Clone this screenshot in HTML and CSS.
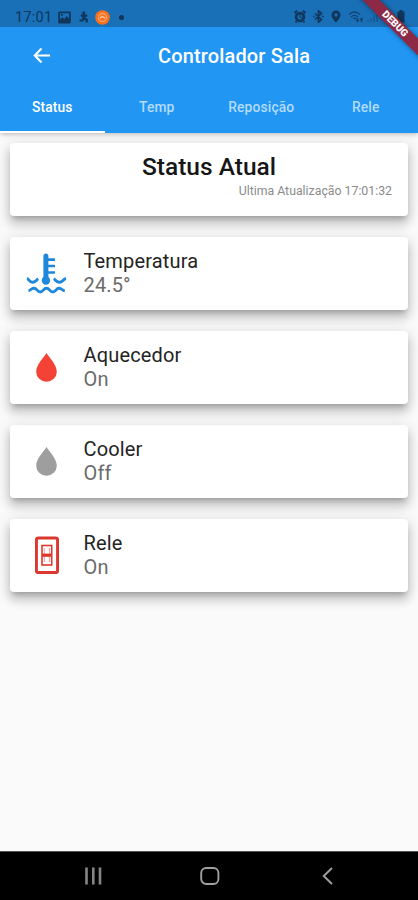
FILE: index.html
```html
<!DOCTYPE html>
<html lang="pt-BR">
<head>
<meta charset="utf-8">
<meta name="viewport" content="width=device-width, initial-scale=1">
<title>Controlador Sala</title>
<link rel="stylesheet" href="styles.css">
</head>
<body>
<div class="phone">
  <header class="header">
    <div class="statusbar">
      <div class="status-left">
        <span class="clock">17:01</span>
        <svg class="s-image" width="13" height="13" viewBox="0 0 13 13"><path fill="currentColor" fill-rule="evenodd" d="M1.500 .5h10a1.300 1.300 0 0 1 1.300 1.300v9.400a1.300 1.300 0 0 1-1.300 1.300h-10A1.300 1.300 0 0 1 .2 11.200V1.800A1.300 1.300 0 0 1 1.500 .5zM1.900 2.200v6.300l2.400-2.300 2 1.700 2.400-2.900 2.400 2.500V2.200zM3 3h1.800v1.800H3z"/></svg>
        <svg class="s-run" width="12" height="14" viewBox="0 0 12 14"><circle cx="5.700" cy="2.800" r="1.600" fill="currentColor"/><path fill="none" stroke="currentColor" stroke-width="2.200" d="M5.700 3.500v5l3 1v3M3 5l3 2 3-2M5.500 8 4.500 10.500H1.500"/></svg>
        <svg class="s-badge" width="15" height="15" viewBox="0 0 15 15"><circle cx="7.500" cy="7.500" r="7.300" fill="#f9701c"/><circle cx="7.500" cy="7.500" r="4" fill="none" stroke="#f4a26b" stroke-width="1.300"/><path d="m5 8 2.300-1.500L10 8" fill="none" stroke="#f9cfae" stroke-width="1.400"/></svg>
        <span class="dot"></span>
      </div>
      <div class="status-right">
        <svg width="12" height="13" viewBox="0 0 12 13"><path d="M.5 3 3.200.8M11.500 3 8.800.8M2.500 11.500l-1 1M9.500 11.500l1 1" stroke="currentColor" stroke-width="2"/><circle cx="6" cy="7" r="3.900" fill="none" stroke="currentColor" stroke-width="2.700"/><path d="M6 4.500V7l2 1" fill="none" stroke="currentColor" stroke-width="1.200"/></svg>
        <svg width="11" height="13" viewBox="0 0 11 13"><path d="m2 3.500 6.500 6-3 2.800V.8l3 2.700-6.500 6M.3 6.500h1.500M9 6.500h1.700" fill="none" stroke="currentColor" stroke-width="1.600"/></svg>
        <svg width="10" height="13" viewBox="0 0 10 13"><path fill="currentColor" fill-rule="evenodd" d="M5 .5a4.500 4.500 0 0 0-4.500 4.500C.5 8.300 5 12.500 5 12.500S9.500 8.300 9.500 5A4.500 4.500 0 0 0 5 .5zM5 3.300a1.700 1.700 0 1 1 0 3.400 1.700 1.700 0 0 1 0-3.400z"/></svg>
        <svg class="wifi" width="16" height="13" viewBox="0 0 16 13"><path d="M1 4.500q5.500-5 11 0M3 7q3.500-3.300 7 0M5.200 9q1.500-1.500 3 0M9.500 8v3.500M8.200 10l1.300 1.500 1.300-1.500M13.500 12V8.500M12.200 9.800l1.300-1.500 1.300 1.500" fill="none" stroke="currentColor" stroke-width="1.300"/></svg>
        <svg class="signal" width="11" height="13" viewBox="0 0 11 13"><path d="M1 12v-2M4 12V8M7 12V5M10 12V1" stroke="currentColor" stroke-width="1.500"/></svg>
        <svg class="battery" width="8" height="13" viewBox="0 0 8 13"><path fill="currentColor" d="M2.500 0h3v1.500h2v11h-7v-11h2z"/></svg>
      </div>
    </div>
    <div class="toolbar">
      <svg class="back" width="18" height="18" viewBox="0 0 18 18"><path d="M17 8.500H2M8.500 1.500 1.800 8.500l6.700 7" fill="none" stroke="#fff" stroke-width="2.100"/></svg>
      <h1>Controlador Sala</h1>
    </div>
    <nav class="tabs">
      <a class="tab active"><span>Status</span></a>
      <a class="tab"><span>Temp</span></a>
      <a class="tab"><span>Reposição</span></a>
      <a class="tab"><span>Rele</span></a>
    </nav>
    <div class="ribbon">DEBUG</div>
  </header>
  <main class="content">
    <section class="card summary">
      <h2>Status Atual</h2>
      <p>Ultima Atualização 17:01:32</p>
    </section>
    <section class="card">
      <div class="icon"><svg class="thermo" width="42" height="42" viewBox="0 0 42 42" fill="none" stroke="#1e88dc"><path d="M19.900 3v25" stroke-width="5" stroke-linecap="round"/><circle cx="19.900" cy="27.500" r="4.200" fill="#1e88dc" stroke="none"/><path d="M22 6.600h7M22 13h7M22 19.500h7" stroke-width="2.700"/><path d="M1 25.500c2 .5 2.300 3.800 5.500 3.800s3.600-2.500 5.800-3.500M27.700 25.800c2.200 1 2.600 3.500 5.800 3.500s3.500-3.300 6.500-3.800" stroke-width="2.900"/><path d="M2.500 37.800C5 37.500 5 35.200 8 35.200s3.200 3.800 6.200 3.800 3.200-3.800 6.300-3.800 3.200 3.800 6.300 3.800 3.200-3.800 6.200-3.800 3 2.300 5.800 2.600" stroke-width="2.900"/></svg></div>
      <div class="info"><h3>Temperatura</h3><p>24.5°</p></div>
    </section>
    <section class="card">
      <div class="icon"><svg width="21" height="29" viewBox="0 0 21 29"><path fill="#f44336" d="M10.500 0C7.500 5 .2 11.700.2 18.700a10.300 10 0 0 0 20.600 0C20.800 11.700 13.500 5 10.500 0z"/></svg></div>
      <div class="info"><h3>Aquecedor</h3><p>On</p></div>
    </section>
    <section class="card">
      <div class="icon"><svg width="21" height="29" viewBox="0 0 21 29"><path fill="#9e9e9e" d="M10.500 0C7.500 5 .2 11.700.2 18.700a10.300 10 0 0 0 20.600 0C20.800 11.700 13.500 5 10.500 0z"/></svg></div>
      <div class="info"><h3>Cooler</h3><p>Off</p></div>
    </section>
    <section class="card">
      <div class="icon"><svg width="24" height="38" viewBox="0 0 24 38" fill="none" stroke="#dc3830"><rect x="1.400" y="1.900" width="21.200" height="34.700" rx="2" stroke-width="3"/><rect x="7" y="9.500" width="9.700" height="19.500" stroke-width="1.600"/><path d="M7 19.200h10" stroke-width="3.200"/><path d="M9.300 12v14M14.400 12v14" stroke-width=".5"/></svg></div>
      <div class="info"><h3>Rele</h3><p>On</p></div>
    </section>
  </main>
  <footer class="navbar">
    <svg width="18" height="18" viewBox="0 0 18 18"><path d="M2.500 .5v17M9.300 .5v17M16 .5v17" stroke="#858585" stroke-width="2.600"/></svg>
    <svg class="home" width="20" height="18" viewBox="0 0 20 18"><rect x="1.200" y="1" width="17.200" height="16" rx="5" fill="none" stroke="#a0a0a0" stroke-width="1.900"/></svg>
    <svg width="12" height="18" viewBox="0 0 12 18"><path d="M10 1 1.700 9 10 17" fill="none" stroke="#a0a0a0" stroke-width="1.900"/></svg>
  </footer>
</div>
</body>
</html>
```
FILE: styles.css
```css
* { box-sizing: border-box; }
body { margin: 0; font-family: Roboto, "Liberation Sans", sans-serif; }
h1, h2, h3, p { margin: 0; }
svg { display: block; flex: none; }

.phone { display: flex; flex-direction: column; width: 418px; height: 900px; background: #fafafa; overflow: hidden; }

.header { position: relative; z-index: 1; flex: none; height: 132.5px; overflow: hidden; background: #2196f3; box-shadow: 0 1px 5px rgba(0, 0, 0, .28); }
.content { flex: 1; display: flex; flex-direction: column; gap: 20.7px; padding: 10.500px 10px 0; }

.statusbar { display: flex; justify-content: space-between; height: 26.500px; padding: 7.500px 12px 0 15px; background: #1a70b7; color: #10365b; }
.status-left, .status-right { display: flex; align-items: center; height: 19px; }
.clock { width: 43px; font-size: 14.500px; letter-spacing: .25px; }
.s-run { margin-left: 7px; }
.s-badge { margin-left: 5px; }
.dot { width: 5px; height: 5px; margin-left: 9px; border-radius: 50%; background: currentColor; }
.status-right { gap: 7px; height: 18px; margin-right: 1px; }
.wifi { opacity: .75; }
.signal { margin-left: -4px; opacity: .35; }
.battery { margin-left: 12px; }

.toolbar { display: flex; align-items: center; height: 58px; padding-left: 33px; color: #fff; }
.toolbar h1 { margin: 1px 0 0 107px; font-size: 20px; font-weight: 500; line-height: 24px; letter-spacing: .15px; white-space: nowrap; }

.tabs { display: flex; height: 48px; }
.tab { flex: 1; display: flex; align-items: center; justify-content: center; padding-bottom: 1px; border-bottom: 2.500px solid transparent; color: #b3dbfb; font-size: 13.800px; font-weight: 500; letter-spacing: .15px; }
.tab.active { color: #fff; border-bottom-color: #fff; }

.ribbon { position: absolute; top: 18px; left: 335px; width: 120px; height: 12px; transform: rotate(45deg); background: #8d2945; box-shadow: 0 0 5px rgba(0, 0, 0, .45); color: #fff; font-size: 10px; font-weight: 900; line-height: 12px; text-align: center; }

.card { flex: none; display: flex; height: 73.200px; border-radius: 4px; background: #fff; box-shadow: 0 5px 5px -3px rgba(0, 0, 0, .2), 0 8px 10px 1px rgba(0, 0, 0, .14), 0 3px 14px 2px rgba(0, 0, 0, .12); }
.summary { flex-direction: column; padding: 9px 16px 0; }
.summary h2 { text-align: center; font-size: 24.500px; font-weight: 500; line-height: 29px; color: #161616; }
.summary p { margin-top: 3px; text-align: right; font-size: 12.300px; line-height: 14px; color: #8b8b8b; }
.icon { display: flex; align-items: center; justify-content: center; width: 73px; }
.thermo { margin-top: 2px; }
.info { padding: 13.500px 0 0 .5px; font-size: 20px; line-height: 23.500px; letter-spacing: .15px; }
.info h3 { font-size: inherit; font-weight: 400; color: #242424; }
.info p { color: #6b6b6b; }

.navbar { flex: none; display: flex; align-items: center; justify-content: space-between; height: 49px; padding: 1px 84px; border-top: 1px solid #555; background: #000; }
.home { margin-right: 4px; }
```
